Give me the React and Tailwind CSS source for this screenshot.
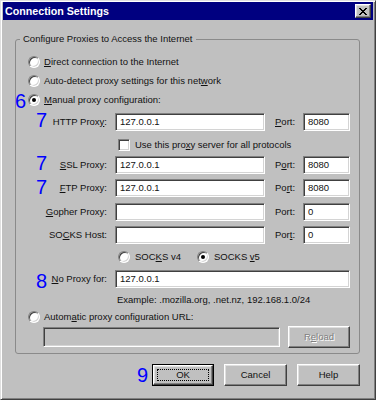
import React from 'react';

const sunken =
  'border border-t-[#808080] border-l-[#808080] border-r-white border-b-white shadow-[inset_1px_1px_0_#404040,inset_-1px_-1px_0_#d4d4d4]';
const raised =
  'border border-t-white border-l-white border-r-[#404040] border-b-[#404040] shadow-[inset_-1px_-1px_0_#808080,inset_1px_1px_0_#dfdfdf]';

function Field({ className = '', disabled, children }) {
  return (
    <div
      className={`h-[18px] flex items-center pl-[4px] text-[#111] ${sunken} ${disabled ? 'bg-[#c0c0c0]' : 'bg-white'} ${className}`}
    >
      {children}
    </div>
  );
}

function Radio({ checked }) {
  return (
    <span
      className={`relative shrink-0 w-[12px] h-[12px] rounded-full bg-white ${sunken} flex items-center justify-center`}
    >
      {checked && <span className="w-[4px] h-[4px] rounded-full bg-black" />}
    </span>
  );
}

function Num({ children, className = '' }) {
  return (
    <span className={`text-[20px] leading-[20px] text-[#0000ff] ${className}`}>{children}</span>
  );
}

// label | host field | port label | port field
function PortRow({ className = '', num, numClass = '', label, value, portLabel, portValue }) {
  return (
    <div className={`relative flex items-center h-[18px] ${className}`}>
      {num && <Num className={`absolute left-[20px] ${numClass}`}>{num}</Num>}
      <div className="w-[91px] text-right">{label}</div>
      <Field className="ml-[8px] w-[150px]">{value}</Field>
      <div className="ml-[10px] w-[28px]">{portLabel}</div>
      <Field className="w-[47px]">{portValue}</Field>
    </div>
  );
}

export default function App() {
  return (
    <div
      className={`w-[376px] h-[400px] bg-[#c0c0c0] px-[2px] pt-[1px] text-[9.5px] leading-[12px] text-[#111] font-['Liberation_Sans',Arial,sans-serif] border border-t-[#dfdfdf] border-l-[#dfdfdf] border-r-[#404040] border-b-[#404040] shadow-[inset_1px_1px_0_#fff,inset_-1px_-1px_0_#808080]`}
    >
      {/* Title bar */}
      <div className="h-[18px] bg-[#000080] flex items-center pl-[2px] pr-[2px]">
        <span className="text-white font-bold text-[10.7px]">Connection Settings</span>
        <div className={`ml-auto w-[16px] h-[14px] bg-[#c0c0c0] flex items-center justify-center ${raised}`}>
          <svg width="8" height="7" viewBox="0 0 8 7" shapeRendering="crispEdges">
            <path
              fill="#000"
              d="M0 0h2v1H0z M6 0h2v1H6z M1 1h2v1H1z M5 1h2v1H5z M2 2h4v1H2z M3 3h2v1H3z M2 4h4v1H2z M1 5h2v1H1z M5 5h2v1H5z M0 6h2v1H0z M6 6h2v1H6z"
            />
          </svg>
        </div>
      </div>

      <div className="pl-[12px]">
        <fieldset className="mt-[13px] w-[345px] border border-[#8a8a8a] rounded-[3px] pb-[5px]">
          <legend className="ml-[4px] px-[3px] leading-[12px]">Configure Proxies to Access the Internet</legend>

          <div className="mt-[7px] h-[19px] flex items-center pl-[12px]">
            <Radio />
            <span className="ml-[4px]"><u>D</u>irect connection to the Internet</span>
          </div>
          <div className="h-[19px] flex items-center pl-[12px]">
            <Radio />
            <span className="ml-[4px]">Auto-detect proxy settings for this net<u>w</u>ork</span>
          </div>
          <div className="relative h-[19px] flex items-center pl-[12px]">
            <Num className="absolute left-[-1px] top-[1px]">6</Num>
            <Radio checked />
            <span className="ml-[4px]"><u>M</u>anual proxy configuration:</span>
          </div>

          <PortRow
            className="mt-[4px]"
            num="7"
            numClass="top-[-3px]"
            label={<>HTTP Prox<u>y</u>:</>}
            value="127.0.0.1"
            portLabel={<><u>P</u>ort:</>}
            portValue="8080"
          />

          <div className="mt-[5px] h-[18px] flex items-center pl-[102px]">
            <span className={`w-[12px] h-[12px] bg-white ${sunken}`} />
            <span className="ml-[5px]">Use this pro<u>x</u>y server for all protocols</span>
          </div>

          <PortRow
            className="mt-[2px]"
            num="7"
            numClass="top-[-3px]"
            label={<><u>S</u>SL Proxy:</>}
            value="127.0.0.1"
            portLabel={<>P<u>o</u>rt:</>}
            portValue="8080"
          />
          <PortRow
            className="mt-[5px]"
            num="7"
            numClass="top-[-2px]"
            label={<><u>F</u>TP Proxy:</>}
            value="127.0.0.1"
            portLabel={<>Po<u>r</u>t:</>}
            portValue="8080"
          />
          <PortRow
            className="mt-[6px]"
            label={<><u>G</u>opher Proxy:</>}
            value=""
            portLabel="Port:"
            portValue="0"
          />
          <PortRow
            className="mt-[5px]"
            label={<>SO<u>C</u>KS Host:</>}
            value=""
            portLabel={<>Por<u>t</u>:</>}
            portValue="0"
          />

          <div className="mt-[4px] h-[18px] flex items-center pl-[102px]">
            <Radio />
            <span className="ml-[5px]">SOC<u>K</u>S v4</span>
            <span className="ml-[16px]"><Radio checked /></span>
            <span className="ml-[5px]">SOCKS <u>v</u>5</span>
          </div>

          <div className="relative mt-[4px] h-[18px] flex items-center">
            <Num className="absolute left-[20px] top-[1px]">8</Num>
            <div className="w-[91px] text-right"><u>N</u>o Proxy for:</div>
            <Field className="ml-[8px] w-[235px]">127.0.0.1</Field>
          </div>

          <div className="mt-[4px] h-[16px] flex items-center pl-[101px]">
            Example: .mozilla.org, .net.nz, 192.168.1.0/24
          </div>

          <div className="h-[17px] flex items-center pl-[12px]">
            <Radio />
            <span className="ml-[4px]">Autom<u>a</u>tic proxy configuration URL:</span>
          </div>

          <div className="mt-[1px] h-[22px] flex items-center pl-[27px]">
            <Field disabled className="!h-[20px] w-[237px]" />
            <div
              className={`ml-[8px] w-[62px] h-[22px] flex items-center justify-center text-[#808080] [text-shadow:1px_1px_0_#fff] ${raised}`}
            >
              R<u>e</u>load
            </div>
          </div>
        </fieldset>

        <div className="mt-[10px] w-[345px] flex items-center justify-end">
          <Num className="mr-[4px]">9</Num>
          <div className="w-[62px] h-[22px] border border-black">
            <div className={`w-full h-full flex items-center justify-center p-[3px] ${raised}`}>
              <div className="w-full h-full flex items-center justify-center border border-dotted border-black">OK</div>
            </div>
          </div>
          <div className={`ml-[10px] w-[63px] h-[22px] flex items-center justify-center ${raised}`}>Cancel</div>
          <div className={`ml-[10px] w-[63px] h-[22px] flex items-center justify-center ${raised}`}>Help</div>
        </div>
      </div>
    </div>
  );
}
